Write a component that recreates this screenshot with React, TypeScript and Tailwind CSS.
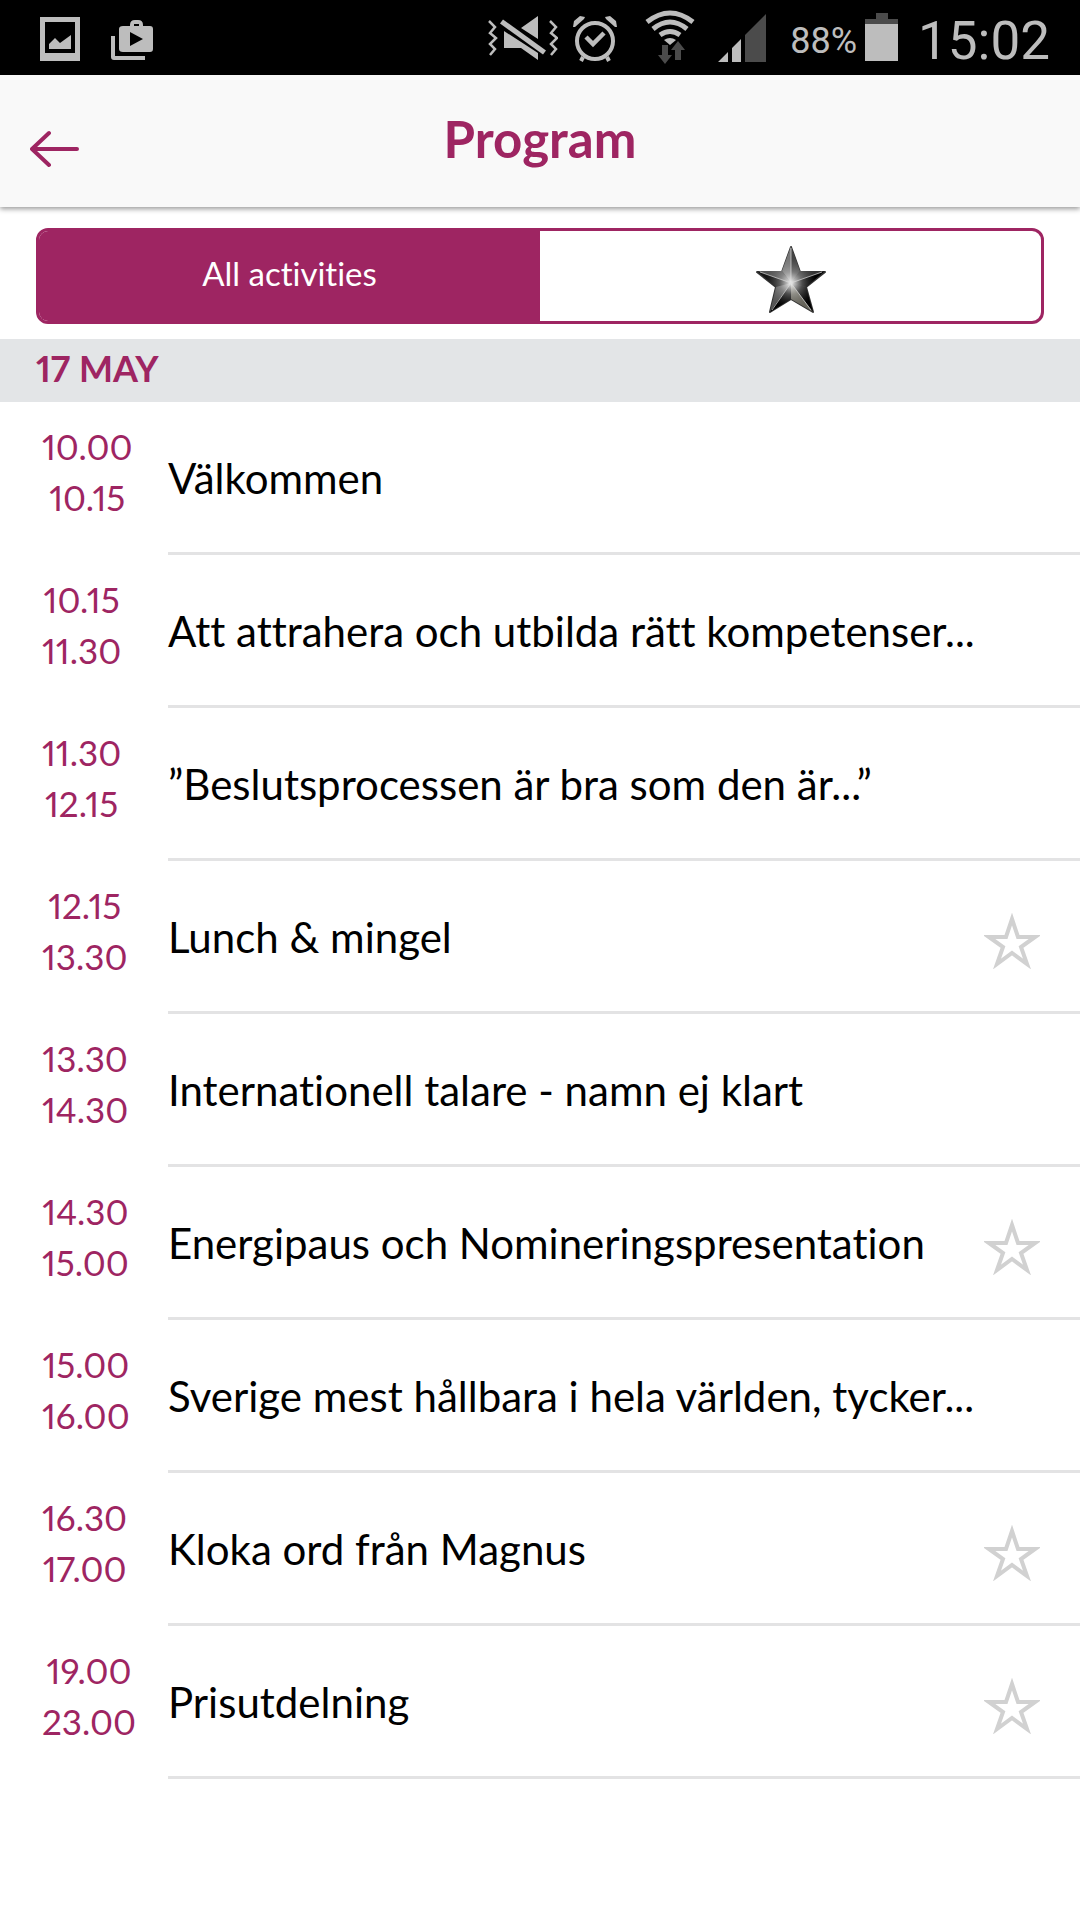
type Activity = { from: string; to: string; title: string; star?: boolean };

const activities: Activity[] = [
  { from: '10.00', to: '10.15', title: 'Välkommen' },
  { from: '10.15', to: '11.30', title: 'Att attrahera och utbilda rätt kompetenser...' },
  { from: '11.30', to: '12.15', title: '”Beslutsprocessen är bra som den är...”' },
  { from: '12.15', to: '13.30', title: 'Lunch & mingel', star: true },
  { from: '13.30', to: '14.30', title: 'Internationell talare - namn ej klart' },
  { from: '14.30', to: '15.00', title: 'Energipaus och Nomineringspresentation', star: true },
  { from: '15.00', to: '16.00', title: 'Sverige mest hållbara i hela världen, tycker...' },
  { from: '16.30', to: '17.00', title: 'Kloka ord från Magnus', star: true },
  { from: '19.00', to: '23.00', title: 'Prisutdelning', star: true },
];

function StatusBar() {
  return (
    <div className="flex h-[75px] items-center bg-black pl-10 pr-[30px] font-['Roboto',sans-serif] text-[#bdbdbd]">
      <svg width="40" height="75" viewBox="40 0 40 75" fill="currentColor" aria-hidden="true">
        <path fillRule="evenodd" d="M40 17h40v44H40zM45 22v31h30V22z" />
        <path d="M49 49v-5l6-6 5 5 11-8v14z" />
      </svg>
      <svg className="ml-[31px]" width="43" height="75" viewBox="111 0 43 75" fill="currentColor" aria-hidden="true">
        <path fillRule="evenodd" d="M123 26h7v-1q0-5 5-5h3q5 0 5 5v1h7q3 0 3 3v20q0 3-3 3h-27q-4 0-4-3V29q0-3 4-3zM134 26h5v-2h-5zM130 32v14l13-7z" />
        <path d="M111 36h4v20h30v4h-31q-3 0-3-3z" />
      </svg>
      <div className="ml-auto flex items-center">
        <svg width="70" height="75" viewBox="488 0 70 75" fill="currentColor" aria-hidden="true">
          <path d="M538 16v23l-17-11zM504 31l34 22v7l-17-12h-17z" />
          <path d="M503 19.500l43 31-3 4-43-31z" />
          <path d="M489 21l6 6-5 6 6 5-6 6 5 5-5 6M550 21l6 6-5 6 6 5-6 6 5 5-5 6" fill="none" stroke="currentColor" strokeWidth="2.500" />
        </svg>
        <svg className="ml-[14px]" width="46" height="75" viewBox="572 0 46 75" fill="none" stroke="currentColor" aria-hidden="true">
          <circle cx="595" cy="41" r="18" strokeWidth="4" />
          <path d="M586 37l7 7 11-11" strokeWidth="4.500" />
          <path d="M583 57l-2 4M607 57l2 4" strokeWidth="4" />
          <path d="M573 27l1-6 6-5 5 1-1 2-9 8zM617 27l-1-6-6-5-5 1 1 2 9 8z" fill="currentColor" stroke="none" />
        </svg>
        <svg className="ml-[27px]" width="50" height="75" viewBox="645 0 50 75" fill="none" stroke="currentColor" aria-hidden="true">
          <path d="M647 22Q670 4 693 22" strokeWidth="5" />
          <path d="M653 29Q670 15 687 29" strokeWidth="5" />
          <path d="M660 35Q670 28 680 35" strokeWidth="5" />
          <path d="M670 45l-6-5q6-4 12 0z" fill="currentColor" stroke="none" />
          <path d="M662 45h6v10h4l-7 9-7-9h4zM675 60h6V50h4l-7-9-7 9h4z" fill="#4b4b4b" stroke="none" />
        </svg>
        <svg className="ml-[23px]" width="48" height="75" viewBox="718 0 48 75" fill="currentColor" aria-hidden="true">
          <path d="M718 62l10-10v10zM732 48l9-9v23h-9z" />
          <path d="M745 35l21-21v48h-21z" fill="#4b4b4b" />
        </svg>
        <span className="ml-6 pt-1.5 text-[36px] leading-none">88%</span>
        <svg className="ml-2" width="33" height="75" viewBox="865 0 33 75" fill="currentColor" aria-hidden="true">
          <path d="M865 19h11v-6h12v6h10v5h-33z" fill="#4b4b4b" />
          <path d="M865 24h33v37h-33z" />
        </svg>
        <span className="ml-5 pt-2 text-[53px] leading-none">15:02</span>
      </div>
    </div>
  );
}

function MetalStar() {
  return (
    <svg width="72" height="70" viewBox="0 0 72 70" aria-hidden="true">
      <defs>
        <radialGradient id="shine" gradientUnits="userSpaceOnUse" cx="36" cy="38" r="25">
          <stop offset="0" stopColor="#fff" stopOpacity="0.95" />
          <stop offset="0.450" stopColor="#ddd" stopOpacity="0.350" />
          <stop offset="1" stopColor="#888" stopOpacity="0" />
        </radialGradient>
      </defs>
      <path d="M36 2l9 25h25L51 42l7 25-22-13-21 13 6-25L2 27h25z" fill="#222" stroke="#333" strokeWidth="2" strokeLinejoin="round" />
      <path d="M36 1v37l-9-12z" fill="#777" />
      <path d="M36 1v37l9-12z" fill="#444" />
      <path d="M2 26h25l9 12z" fill="#555" />
      <path d="M2 26l34 12-15 4z" fill="#161616" />
      <path d="M70 26H45l-9 12z" fill="#333" />
      <path d="M70 26L36 38l15 4z" fill="#000" />
      <path d="M15 67l6-25 15-4z" fill="#555" />
      <path d="M15 67l21-29v16z" fill="#000" />
      <path d="M58 67L36 38v16z" fill="#66645a" />
      <path d="M58 67L36 38l15 4z" fill="#000" />
      <path d="M36 1l9 25h25L51 42l7 25-22-13-21 13 6-25L2 26h25z" fill="url(#shine)" />
      <path d="M36 3v35M5 27l31 11 31-11M17 65l19-27 20 27" fill="none" stroke="#ddd" strokeOpacity="0.700" />
    </svg>
  );
}

export default function App() {
  return (
    <div className="min-h-screen bg-white font-['Lato',sans-serif] text-black [font-variant-ligatures:none]">
      <StatusBar />
      <header className="relative grid h-[132px] grid-cols-[108px_1fr_108px] bg-[#f9f9f9] shadow-[0_2px_5px_rgba(0,0,0,0.4)]">
        <button type="button" aria-label="Back" className="flex items-center pl-[30px] pt-[16px]">
          <svg width="50" height="38" viewBox="0 0 50 38" fill="none" stroke="#9e2562" strokeWidth="4" strokeLinecap="round" strokeLinejoin="round" aria-hidden="true">
            <path d="M47 19H2M19 3L2 19l17 16" />
          </svg>
        </button>
        <h1 className="pt-8 text-center text-[51px] font-bold leading-[64px] text-[#9e2562]">Program</h1>
      </header>
      <main>
        <div className="px-9 pb-[15px] pt-[21px]">
          <div className="grid h-24 grid-cols-2 overflow-hidden rounded-xl border-[3px] border-[#9e2562]">
            <button type="button" className="bg-[#9e2562] pb-1 text-[33px] text-white">All activities</button>
            <button type="button" aria-label="Starred activities" className="flex items-center justify-center pt-2">
              <MetalStar />
            </button>
          </div>
        </div>
        <h2 className="bg-[#e3e5e7] px-9 pb-1 text-[36px] font-bold proportional-nums leading-[59px] text-[#9e2562]">17 MAY</h2>
        <ul>
          {activities.map((a) => (
            <li key={a.title} className="grid h-[153px] grid-cols-[168px_1fr]">
              <div className="justify-self-start pl-[42px] pt-[19px] text-center text-[35px] proportional-nums leading-[51px] text-[#9e2562]">
                <div>{a.from}</div>
                <div>{a.to}</div>
              </div>
              <div className="flex min-w-0 items-center justify-between border-b-[3px] border-[#e3e3e4] pr-10">
                <span className="whitespace-nowrap pt-0.5 text-[42px] leading-[56px]">{a.title}</span>
                {a.star && (
                  <button type="button" aria-label={`Star ${a.title}`} className="pt-2.5">
                    <svg width="56" height="56" viewBox="0 0 56 56" fill="none" stroke="#d1d1d1" strokeWidth="4" aria-hidden="true">
                      <path d="M28 6l6 18h17L37 34l6 17-15-11-15 11 6-17L5 24h17z" />
                    </svg>
                  </button>
                )}
              </div>
            </li>
          ))}
        </ul>
      </main>
    </div>
  );
}
